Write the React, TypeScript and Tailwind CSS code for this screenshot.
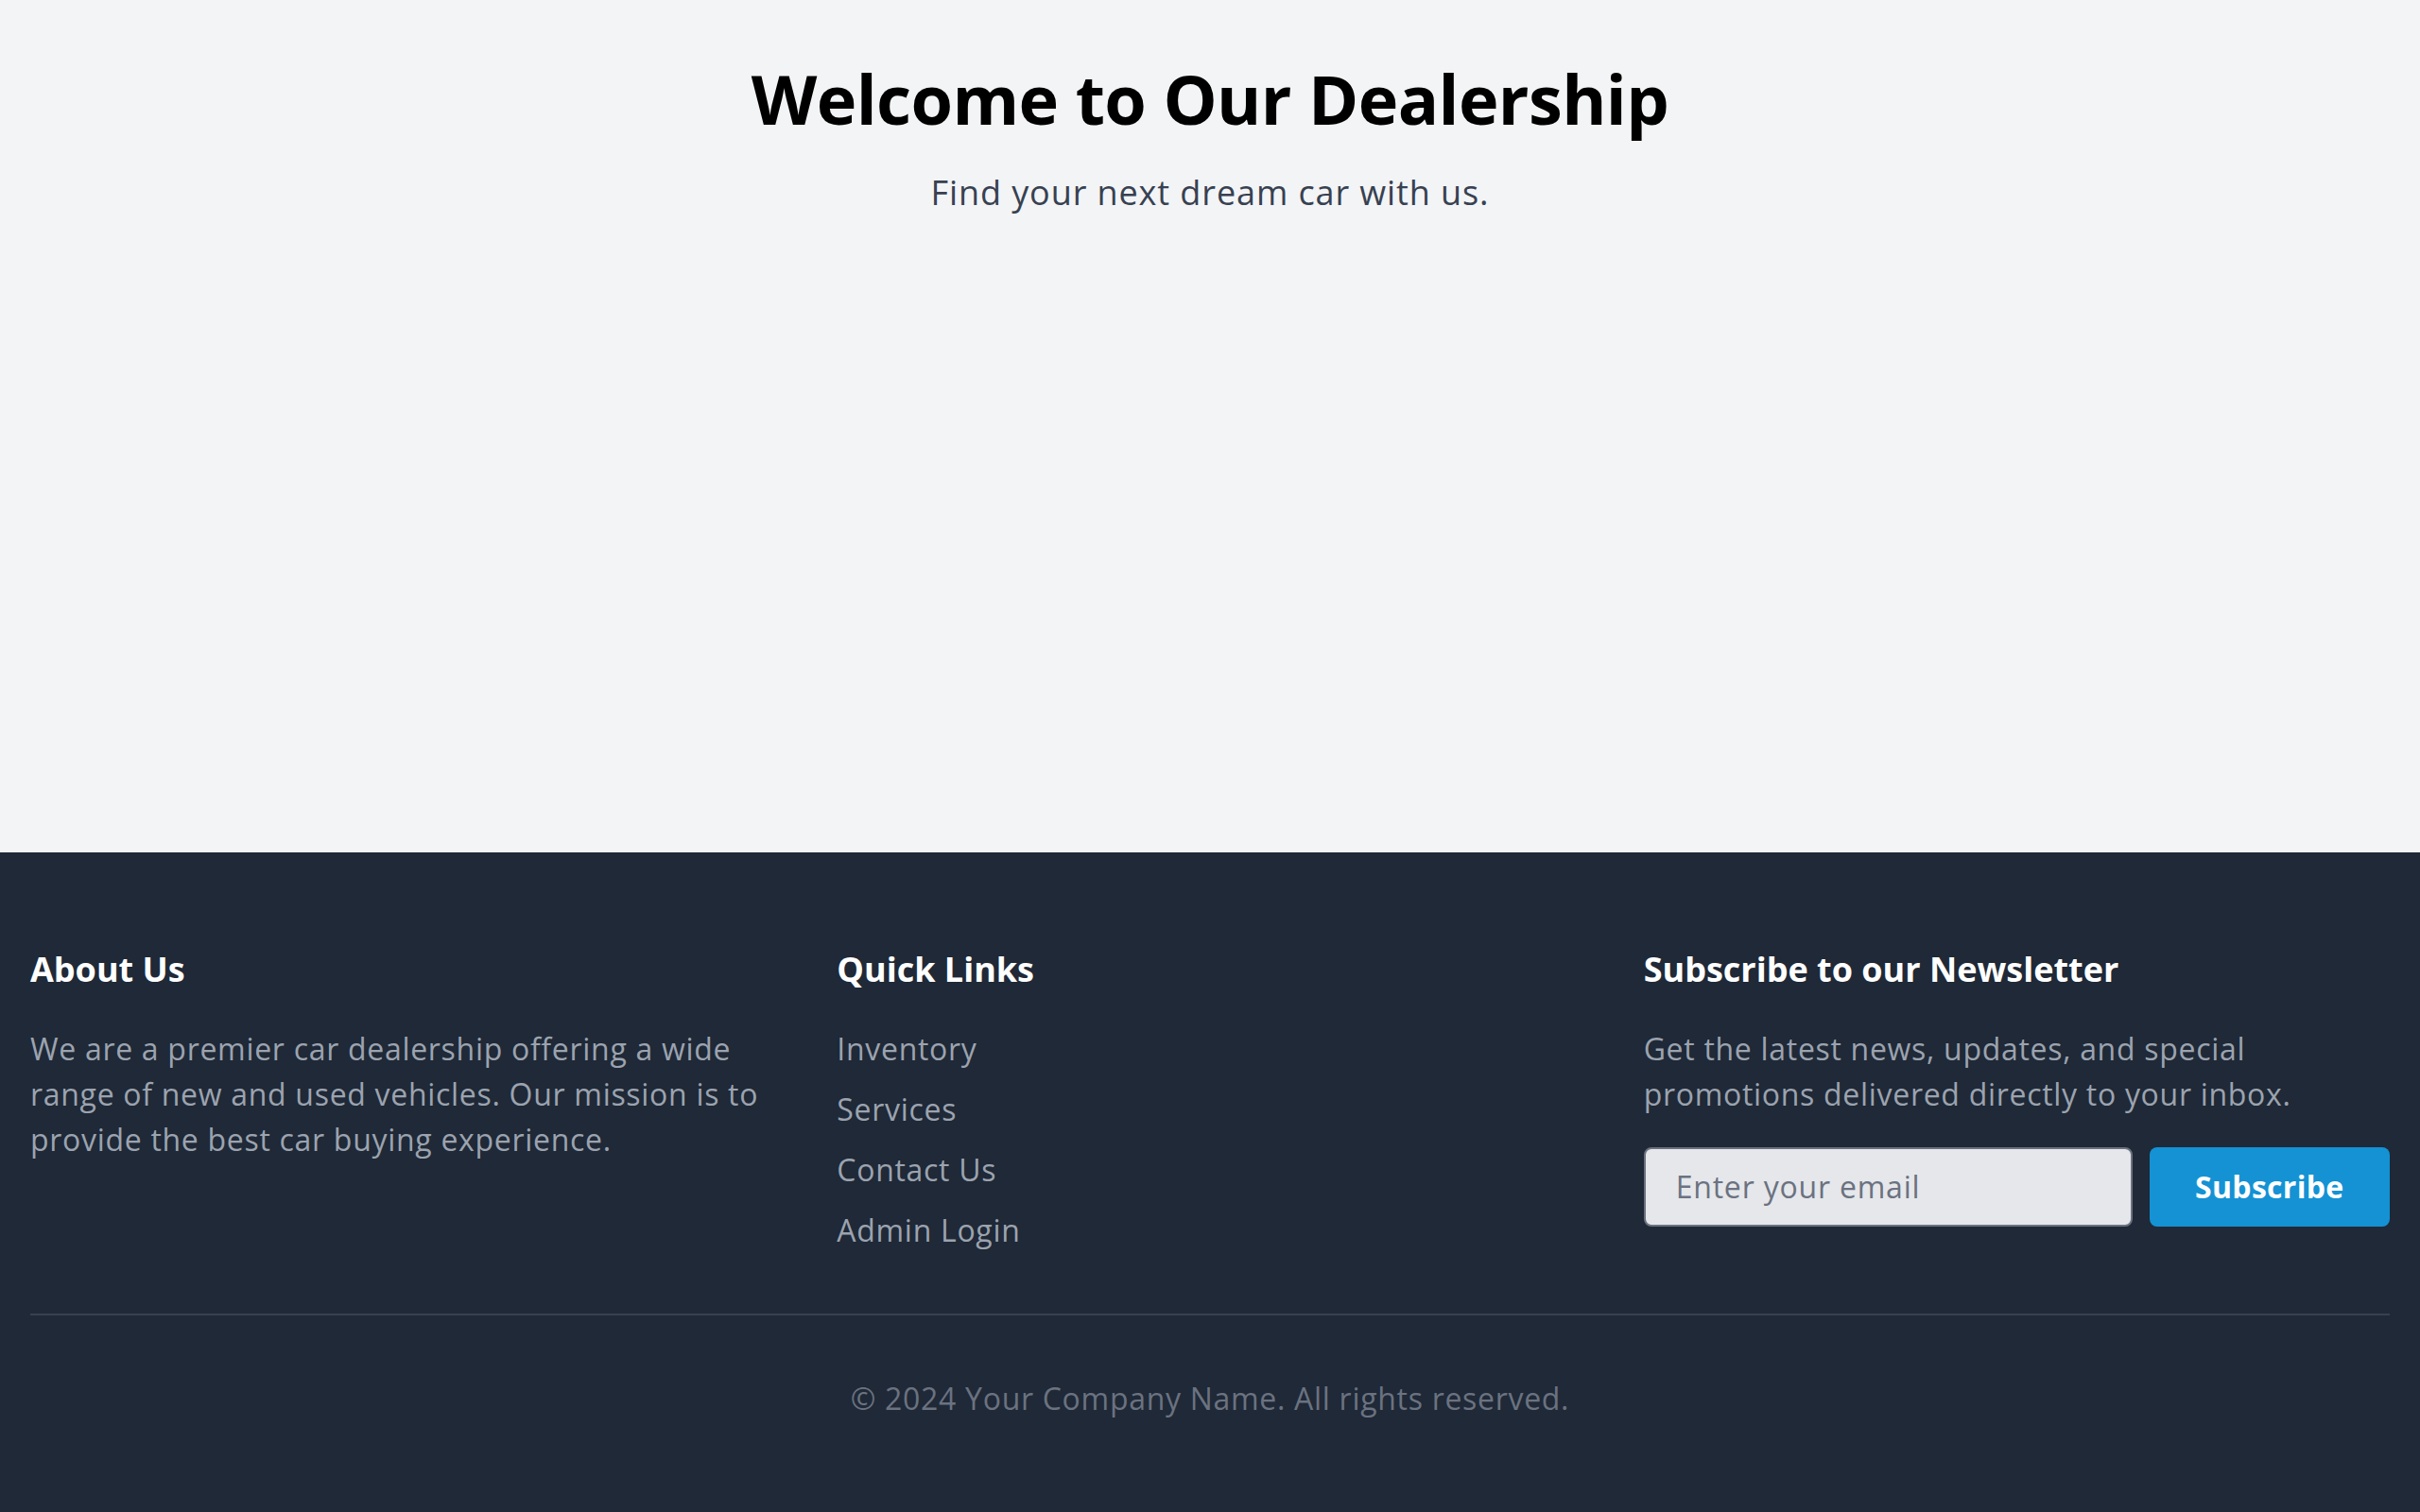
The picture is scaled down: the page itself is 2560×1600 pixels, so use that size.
import React from "react";

export default function App() {
  return (
    <div
      className="flex min-h-screen flex-col bg-[#f3f4f6]"
      style={{ fontFamily: '"Open Sans", "Noto Sans", sans-serif' }}
    >
      <main className="flex-grow px-[32px] pt-[64px] text-center">
        <h1 className="text-[72px] font-bold leading-[80px] tracking-[-0.6px] text-black">
          Welcome to Our Dealership
        </h1>
        <p className="mt-[32px] text-[36px] leading-[56px] tracking-[0.9px] text-[#374151]">
          Find your next dream car with us.
        </p>
      </main>
      <footer className="bg-[#1f2937] px-[32px] py-[96px] text-[32px] leading-[48px] tracking-[0.7px]">
        <div className="grid grid-cols-3 gap-[64px]">
          <div>
            <h3 className="mb-[32px] text-[36px] font-bold leading-[56px] tracking-normal text-white">
              About Us
            </h3>
            <p className="text-[#9ca3af]">
              We are a premier car dealership offering a wide range of new and
              used vehicles. Our mission is to provide the best car buying
              experience.
            </p>
          </div>
          <div>
            <h3 className="mb-[32px] text-[36px] font-bold leading-[56px] tracking-normal text-white">
              Quick Links
            </h3>
            <ul className="flex flex-col gap-[16px] text-[#9ca3af]">
              <li>Inventory</li>
              <li>Services</li>
              <li>Contact Us</li>
              <li>Admin Login</li>
            </ul>
          </div>
          <div>
            <h3 className="mb-[32px] text-[36px] font-bold leading-[56px] tracking-normal text-white">
              Subscribe to our Newsletter
            </h3>
            <p className="mb-[32px] text-[#9ca3af]">
              Get the latest news, updates, and special promotions delivered
              directly to your inbox.
            </p>
            <div className="flex gap-[18px]">
              <input
                type="email"
                placeholder="Enter your email"
                className="w-[517px] rounded-[8px] border-2 border-[#6b7280] bg-[#e5e7eb] px-[32px] py-[16px] text-[32px] leading-[48px] tracking-[0.8px] text-[#111827] placeholder:text-[#6b7280] outline-none"
              />
              <button className="flex-1 rounded-[8px] bg-[#1492d4] px-[48px] text-[32px] font-bold leading-[48px] tracking-[0.3px] text-white">
                Subscribe
              </button>
            </div>
          </div>
        </div>
        <div className="mt-[64px] border-t-2 border-[#374151] pt-[64px] text-center text-[#6b7280]">
          © 2024 Your Company Name. All rights reserved.
        </div>
      </footer>
    </div>
  );
}
